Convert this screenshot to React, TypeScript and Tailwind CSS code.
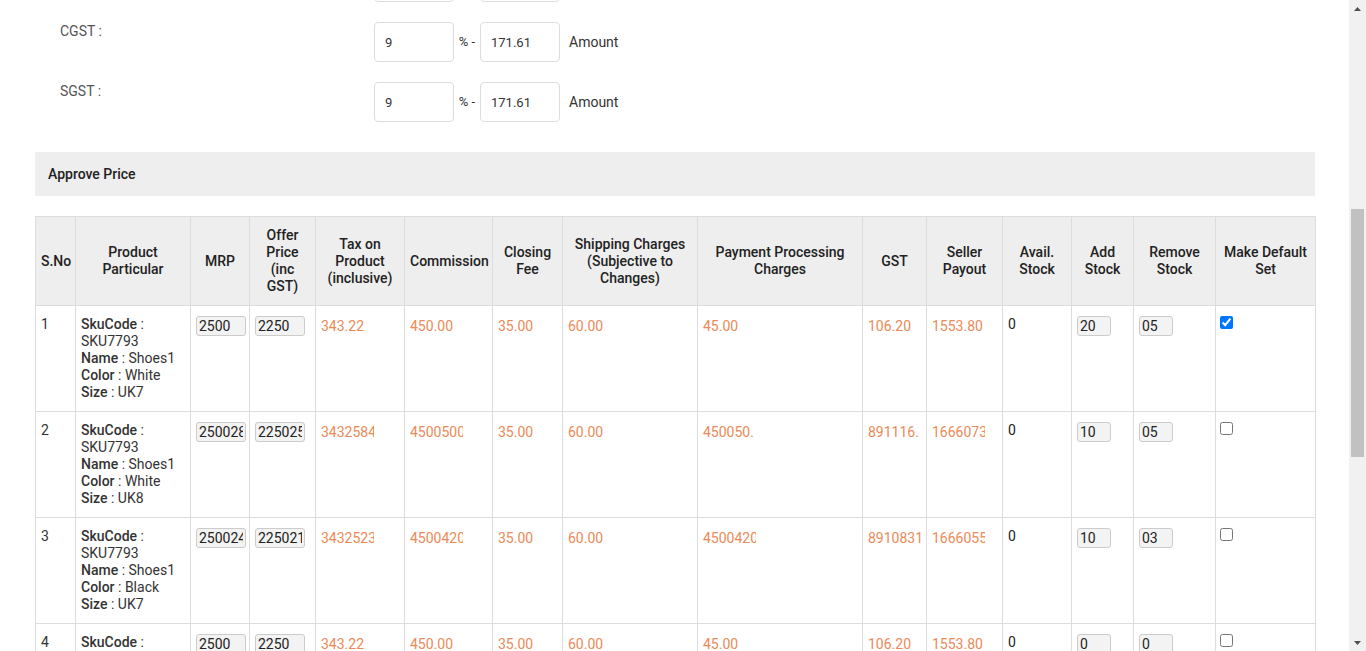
import React from 'react';

type Row = {
  n: number;
  sku: string;
  name: string;
  color: string;
  size: string;
  mrp: string;
  offer: string;
  tax: string;
  comm: string;
  closing: string;
  ship: string;
  pay: string;
  gst: string;
  payout: string;
  avail: string;
  add: string;
  remove: string;
  def: boolean;
};

const rows: Row[] = [
  { n: 1, sku: 'SKU7793', name: 'Shoes1', color: 'White', size: 'UK7', mrp: '2500', offer: '2250', tax: '343.22', comm: '450.00', closing: '35.00', ship: '60.00', pay: '45.00', gst: '106.20', payout: '1553.80', avail: '0', add: '20', remove: '05', def: true },
  { n: 2, sku: 'SKU7793', name: 'Shoes1', color: 'White', size: 'UK8', mrp: '2500280', offer: '2250252', tax: '3432584.11', comm: '4500500.40', closing: '35.00', ship: '60.00', pay: '450050.  ', gst: '891116.  ', payout: '1666073.82', avail: '0', add: '10', remove: '05', def: false },
  { n: 3, sku: 'SKU7793', name: 'Shoes1', color: 'Black', size: 'UK7', mrp: '2500240', offer: '2250216', tax: '3432523.07', comm: '4500420.00', closing: '35.00', ship: '60.00', pay: '4500420.00', gst: '8910831.60', payout: '1666055.33', avail: '0', add: '10', remove: '03', def: false },
  { n: 4, sku: 'SKU7793', name: 'Shoes1', color: 'Black', size: 'UK8', mrp: '2500', offer: '2250', tax: '343.22', comm: '450.00', closing: '35.00', ship: '60.00', pay: '45.00', gst: '106.20', payout: '1553.80', avail: '0', add: '0', remove: '0', def: false },
];

const headers = [
  'S.No',
  'Product Particular',
  'MRP',
  'Offer Price (inc GST)',
  'Tax on Product (inclusive)',
  'Commission',
  'Closing Fee',
  'Shipping Charges (Subjective to Changes)',
  'Payment Processing Charges',
  'GST',
  'Seller Payout',
  'Avail. Stock',
  'Add Stock',
  'Remove Stock',
  'Make Default Set',
];

const widths = [40, 115, 59, 66, 89, 88, 70, 135, 165, 64, 76, 69, 62, 82, 100];

const TaxRow = ({ label, pct, amt }: { label: string; pct: string; amt: string }) => (
  <div className="flex items-start h-[40px]">
    <div className="w-[339px] pl-[25px] -mt-[1px] text-[14px] text-[#555]">{label}</div>
    <input
      readOnly
      value={pct}
      className="w-[80px] h-[40px] border border-[#ddd] rounded-[4px] px-[10px] text-[13px] text-[#333] outline-none"
    />
    <span className="w-[26px] text-center text-[13px] text-[#333] self-center">% -</span>
    <input
      readOnly
      value={amt}
      className="w-[80px] h-[40px] border border-[#ddd] rounded-[4px] px-[10px] text-[13px] text-[#333] outline-none"
    />
    <span className="ml-[9px] text-[14px] text-[#333] self-center">Amount</span>
  </div>
);

const SmallInput = ({ value, w }: { value: string; w: string }) => (
  <input
    readOnly
    value={value}
    className={`${w} h-[20px] border border-[#ccc] rounded-[3px] bg-[#f3f3f3] px-[2px] text-[14px] text-[#222] outline-none block`}
  />
);

const Val = ({ v }: { v: string }) => (
  <div className="mt-[2px] w-[53px] overflow-hidden whitespace-pre text-[#ec8a57]">{v}</div>
);

const Scrollbar = () => (
  <div className="w-[17px] h-full bg-[#f1f1f1] flex flex-col shrink-0">
    <div className="h-[17px] flex items-center justify-center">
      <svg width="7" height="4" viewBox="0 0 7 4"><path d="M3.5 0L7 4H0z" fill="#505050" /></svg>
    </div>
    <div className="flex-1 flex flex-col px-[2px]">
      <div className="h-[192px]" />
      <div className="h-[248px] bg-[#c1c1c1]" />
    </div>
    <div className="h-[17px] flex items-center justify-center">
      <svg width="7" height="4" viewBox="0 0 7 4"><path d="M0 0H7L3.5 4z" fill="#505050" /></svg>
    </div>
  </div>
);

const App: React.FC = () => {
  return (
    <div className="flex h-[651px] w-full overflow-hidden bg-white font-['Roboto',sans-serif] text-[#333]">
      <div className="flex-1 min-w-0 overflow-hidden">
        <div className="ml-[35px] mr-[34px] -mt-[38px] flex flex-col">
          <div className="flex flex-col gap-[20px]">
            <TaxRow label="IGST :" pct="0" amt="0.00" />
            <TaxRow label="CGST :" pct="9" amt="171.61" />
            <TaxRow label="SGST :" pct="9" amt="171.61" />
          </div>

          <div className="mt-[30px] h-[44px] bg-[#eee] flex items-center pl-[13px] text-[14px] font-medium text-[#222]">
            Approve Price
          </div>

          <table className="mt-[20px] w-full table-fixed border-collapse border border-[#ddd] text-[14px] leading-[17px]">
            <colgroup>
              {widths.map((w, i) => (
                <col key={i} style={{ width: w }} />
              ))}
            </colgroup>
            <thead>
              <tr className="bg-[#eee]">
                {headers.map((h, i) => (
                  <th
                    key={h}
                    className={`border border-[#ddd] px-[5px] py-[10px] h-[89px] align-middle font-medium text-[#222] ${i === 0 ? 'text-left' : 'text-center'}`}
                  >
                    {h}
                  </th>
                ))}
              </tr>
            </thead>
            <tbody>
              {rows.map((r) => (
                <tr key={r.n} className="h-[106px]">
                  <td className="border border-[#ddd] px-[5px] pt-[10px] align-top">{r.n}</td>
                  <td className="border border-[#ddd] px-[5px] pt-[10px] align-top">
                    <div><span className="font-medium">SkuCode</span> : {r.sku}</div>
                    <div><span className="font-medium">Name</span> : {r.name}</div>
                    <div><span className="font-medium">Color</span> : {r.color}</div>
                    <div><span className="font-medium">Size</span> : {r.size}</div>
                  </td>
                  <td className="border border-[#ddd] px-[5px] pt-[10px] align-top">
                    <SmallInput value={r.mrp} w="w-[50px]" />
                  </td>
                  <td className="border border-[#ddd] px-[5px] pt-[10px] align-top">
                    <SmallInput value={r.offer} w="w-[50px]" />
                  </td>
                  <td className="border border-[#ddd] px-[5px] pt-[10px] align-top"><Val v={r.tax} /></td>
                  <td className="border border-[#ddd] px-[5px] pt-[10px] align-top"><Val v={r.comm} /></td>
                  <td className="border border-[#ddd] px-[5px] pt-[10px] align-top"><Val v={r.closing} /></td>
                  <td className="border border-[#ddd] px-[5px] pt-[10px] align-top"><Val v={r.ship} /></td>
                  <td className="border border-[#ddd] px-[5px] pt-[10px] align-top"><Val v={r.pay} /></td>
                  <td className="border border-[#ddd] px-[5px] pt-[10px] align-top"><Val v={r.gst} /></td>
                  <td className="border border-[#ddd] px-[5px] pt-[10px] align-top"><Val v={r.payout} /></td>
                  <td className="border border-[#ddd] px-[5px] pt-[10px] align-top text-[#222]">{r.avail}</td>
                  <td className="border border-[#ddd] px-[5px] pt-[10px] align-top">
                    <SmallInput value={r.add} w="w-[34px]" />
                  </td>
                  <td className="border border-[#ddd] px-[5px] pt-[10px] align-top">
                    <SmallInput value={r.remove} w="w-[34px]" />
                  </td>
                  <td className="border border-[#ddd] px-[5px] pt-[10px] align-top">
                    <input type="checkbox" defaultChecked={r.def} className="block -ml-[1px] w-[13px] h-[13px]" />
                  </td>
                </tr>
              ))}
            </tbody>
          </table>
        </div>
      </div>
      <Scrollbar />
    </div>
  );
};

export default App;
